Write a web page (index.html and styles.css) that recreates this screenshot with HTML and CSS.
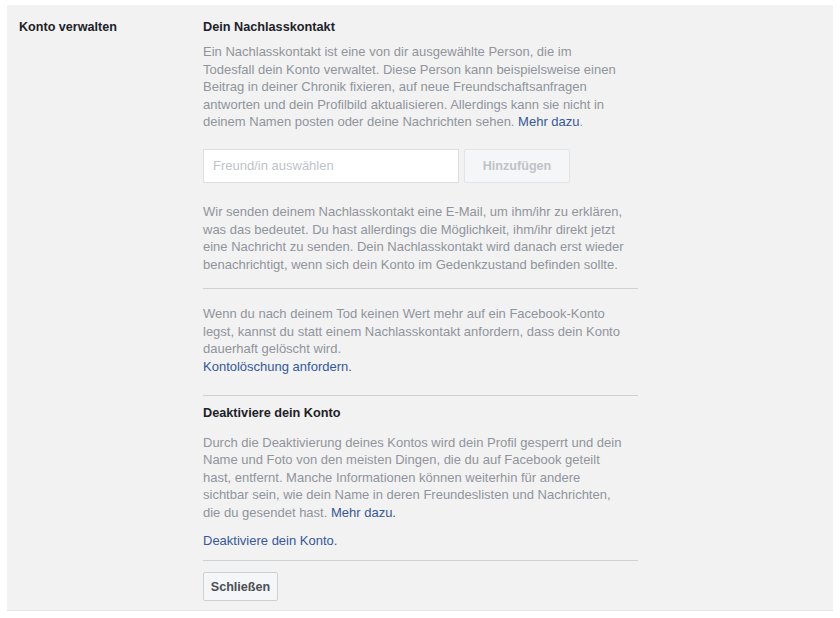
FILE: index.html
```html
<!DOCTYPE html>
<html lang="de">
<head>
<meta charset="utf-8">
<title>Konto verwalten</title>
<link rel="stylesheet" href="styles.css">
</head>
<body>
<div class="panel">
  <div class="label">Konto verwalten</div>
  <div class="content">
    <h3 class="heading">Dein Nachlasskontakt</h3>
    <p class="text intro">Ein Nachlasskontakt ist eine von dir ausgewählte Person, die im<br>Todesfall dein Konto verwaltet. Diese Person kann beispielsweise einen<br>Beitrag in deiner Chronik fixieren, auf neue Freundschaftsanfragen<br>antworten und dein Profilbild aktualisieren. Allerdings kann sie nicht in<br>deinem Namen posten oder deine Nachrichten sehen. <a class="link" href="#">Mehr dazu</a>.</p>
    <div class="picker">
      <input class="friend-input" type="text" placeholder="Freund/in auswählen">
      <button class="btn btn-disabled" type="button">Hinzufügen</button>
    </div>
    <p class="text notice">Wir senden deinem Nachlasskontakt eine E-Mail, um ihm/ihr zu erklären,<br>was das bedeutet. Du hast allerdings die Möglichkeit, ihm/ihr direkt jetzt<br>eine Nachricht zu senden. Dein Nachlasskontakt wird danach erst wieder<br>benachrichtigt, wenn sich dein Konto im Gedenkzustand befinden sollte.</p>
    <hr class="divider div1">
    <p class="text delete">Wenn du nach deinem Tod keinen Wert mehr auf ein Facebook-Konto<br>legst, kannst du statt einem Nachlasskontakt anfordern, dass dein Konto<br>dauerhaft gelöscht wird.<br><a class="link" href="#">Kontolöschung anfordern.</a></p>
    <hr class="divider div2">
    <h3 class="heading deact-heading">Deaktiviere dein Konto</h3>
    <p class="text deact">Durch die Deaktivierung deines Kontos wird dein Profil gesperrt und dein<br>Name und Foto von den meisten Dingen, die du auf Facebook geteilt<br>hast, entfernt. Manche Informationen können weiterhin für andere<br>sichtbar sein, wie dein Name in deren Freundeslisten und Nachrichten,<br>die du gesendet hast. <a class="link" href="#">Mehr dazu.</a></p>
    <p class="text deact-link"><a class="link" href="#">Deaktiviere dein Konto.</a></p>
    <hr class="divider div3">
    <button class="btn btn-close" type="button">Schließen</button>
  </div>
</div>
</body>
</html>
```

FILE: styles.css
```css
html, body {
  margin: 0;
  padding: 0;
  background: #ffffff;
}

body {
  font-family: "Liberation Sans", Arial, Helvetica, sans-serif;
  font-size: 13px;
  line-height: 17.5px;
  color: #1d2129;
}

.panel {
  margin: 5px 0 0 7px;
  width: 826px;
  height: 606px;
  box-sizing: border-box;
  background: #f2f2f2;
  border-bottom: 1px solid #e6e6e6;
  display: grid;
  grid-template-columns: 184px 435px;
  padding: 14px 0 0 12px;
}

.label {
  font-size: 12.6px;
  font-weight: bold;
  color: #1d2129;
}

.content {
  display: flex;
  flex-direction: column;
  align-items: flex-start;
}

.heading {
  margin: 0;
  font-size: 12.7px;
  font-weight: bold;
  color: #1d2129;
}

.text {
  margin: 0;
  color: #90949c;
  width: 435px;
}

.intro { margin-top: 6.5px; }

.link {
  color: #365899;
  text-decoration: none;
}

.picker {
  display: flex;
  gap: 5px;
  margin-top: 18px;
}

.friend-input {
  box-sizing: border-box;
  width: 256px;
  height: 34px;
  margin: 0;
  padding: 0 9px;
  border: 1px solid #dddfe2;
  background: #ffffff;
  font-family: inherit;
  font-size: 13px;
  color: #1d2129;
  outline: none;
}

.friend-input::placeholder {
  color: #bec3c9;
}

.btn {
  box-sizing: border-box;
  margin: 0;
  font-family: inherit;
  font-size: 12.6px;
  font-weight: bold;
  border-radius: 2px;
  cursor: pointer;
}

.btn-disabled {
  width: 106px;
  height: 34px;
  border: 1px solid #e3e4e6;
  background: #f5f6f7;
  color: #bec3c9;
}

.notice { margin-top: 20.5px; }

.divider {
  width: 435px;
  margin: 0;
  border: 0;
  border-top: 1px solid #cfd1d5;
  height: 0;
}

.div1 { margin-top: 15px; }

.delete { margin-top: 16px; }

.div2 { margin-top: 19.5px; }

.deact-heading { margin-top: 9px; }

.deact { margin-top: 11.5px; }

.deact-link { margin-top: 10.5px; }

.div3 { margin-top: 11px; }

.btn-close {
  margin-top: 11px;
  width: 75px;
  height: 29px;
  padding: 0;
  border: 1px solid #ced0d4;
  background: #f5f6f7;
  color: #4b4f56;
}
```
